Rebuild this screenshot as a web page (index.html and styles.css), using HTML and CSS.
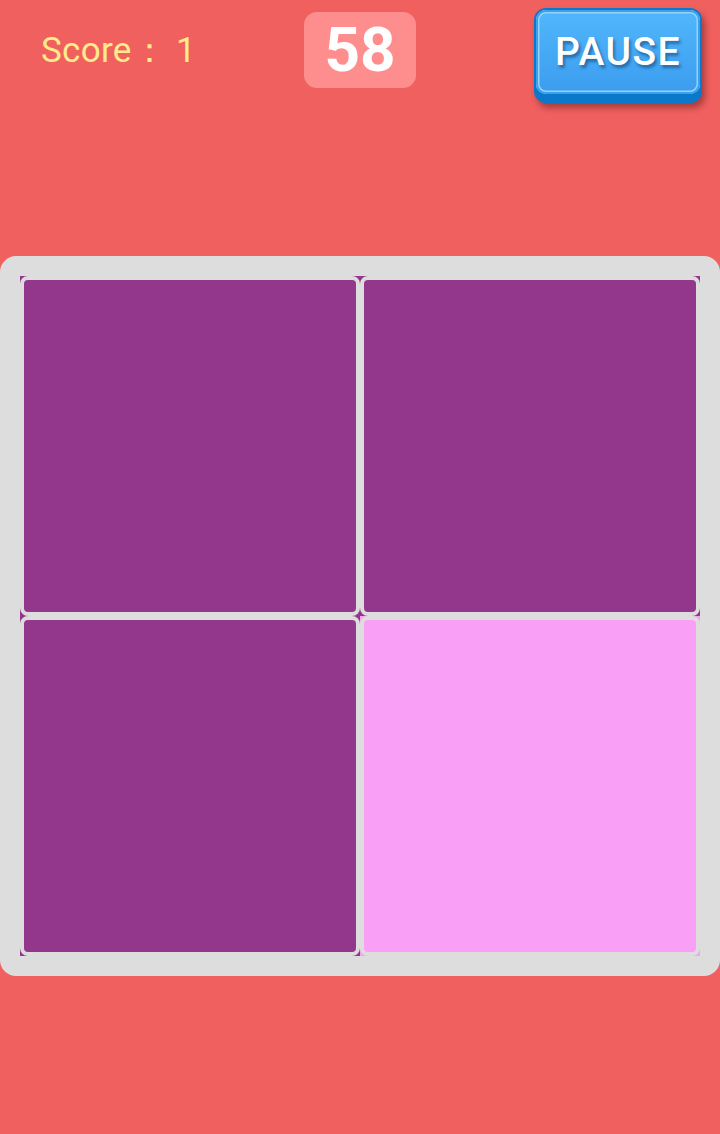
FILE: index.html
```html
<!DOCTYPE html>
<html>
<head>
<meta charset="utf-8">
<link rel="stylesheet" href="styles.css">
</head>
<body>
<div class="app">
  <header class="top">
    <div class="score">Score： 1</div>
    <div class="timer">58</div>
    <div class="pause-wrap">
      <div class="pause">
        <div class="pause-face">PAUSE</div>
      </div>
    </div>
  </header>
  <main class="board">
    <div class="cell purple"><div class="cell-inner"></div></div>
    <div class="cell purple"><div class="cell-inner"></div></div>
    <div class="cell purple"><div class="cell-inner"></div></div>
    <div class="cell pink"><div class="cell-inner"></div></div>
  </main>
</div>
</body>
</html>
```
FILE: styles.css
```css
html, body {
  margin: 0;
  padding: 0;
}
body {
  background: #f0605f;
  font-family: Roboto, "Liberation Sans", sans-serif;
  width: 720px;
  height: 1134px;
  overflow: hidden;
}
.top {
  height: 256px;
  display: grid;
  grid-template-columns: 1fr auto 1fr;
  align-items: start;
}
.score {
  color: #fdeb8c;
  font-size: 35px;
  padding-left: 41px;
  padding-top: 29px;
  line-height: 44px;
  white-space: nowrap;
  letter-spacing: 0.3px;
}
.timer {
  margin-top: 12px;
  width: 112px;
  height: 76px;
  border-radius: 13px;
  background: #fe8e8e;
  color: #fff;
  font-weight: 700;
  font-size: 62px;
  line-height: 76px;
  text-align: center;
}
.pause-wrap {
  display: flex;
  justify-content: flex-end;
  padding-right: 18px;
  padding-top: 8px;
}
.pause {
  width: 168px;
  box-sizing: border-box;
  background: #0b79cb;
  border-radius: 12px;
  padding: 2px 2px 9px;
  box-shadow: 3px 5px 6px rgba(80, 20, 20, 0.45);
}
.pause-face {
  height: 84px;
  border-radius: 10px;
  background: linear-gradient(#52b7fb, #3b9cef);
  box-shadow: inset 0 0 0 2px #3aa0ee, inset 0 0 0 3.5px #94d3fa;
  color: #fff;
  font-weight: 500;
  font-size: 39px;
  letter-spacing: 1.5px;
  line-height: 84px;
  text-align: center;
  text-shadow: 2px 3px 3px rgba(10, 60, 110, 0.55);
}
.board {
  background: #dddddd;
  border-radius: 16px;
  padding: 20px;
  display: grid;
  grid-template-columns: 340px 340px;
  grid-template-rows: 340px 340px;
}
.cell {
  box-sizing: border-box;
}
.cell-inner {
  box-sizing: border-box;
  width: 100%;
  height: 100%;
  border: 4px solid #dddddd;
  border-radius: 8px;
}
.purple, .purple .cell-inner {
  background: #93378c;
}
.pink, .pink .cell-inner {
  background: #fa9ff6;
}
```
